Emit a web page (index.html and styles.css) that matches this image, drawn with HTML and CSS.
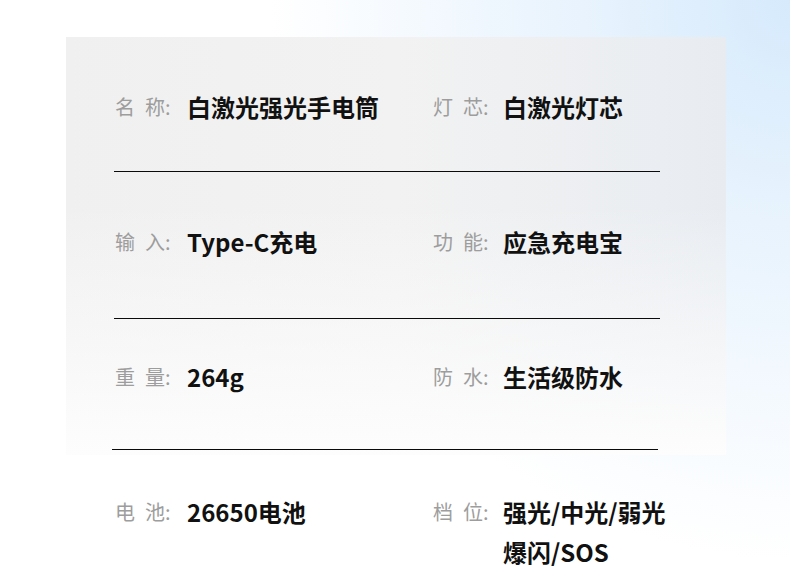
FILE: index.html
```html
<!DOCTYPE html>
<html lang="zh-CN">
<head>
    <meta charset="UTF-8">
    <meta name="viewport" content="width=device-width, initial-scale=1.0">
    <title>白激光强光手电筒 参数</title>
    <link rel="stylesheet" href="styles.css">
</head>
<body>
    <div class="page">
        <div class="spec-card">
            <div class="spec-row row-1">
                <div class="spec-item">
                    <span class="label">名&ensp;称:</span>
                    <span class="value">白激光强光手电筒</span>
                </div>
                <div class="spec-item">
                    <span class="label">灯&ensp;芯:</span>
                    <span class="value">白激光灯芯</span>
                </div>
            </div>
            <div class="divider"></div>
            <div class="spec-row row-2">
                <div class="spec-item">
                    <span class="label">输&ensp;入:</span>
                    <span class="value">Type-C充电</span>
                </div>
                <div class="spec-item">
                    <span class="label">功&ensp;能:</span>
                    <span class="value">应急充电宝</span>
                </div>
            </div>
            <div class="divider"></div>
            <div class="spec-row row-3">
                <div class="spec-item">
                    <span class="label">重&ensp;量:</span>
                    <span class="value">264g</span>
                </div>
                <div class="spec-item">
                    <span class="label">防&ensp;水:</span>
                    <span class="value">生活级防水</span>
                </div>
            </div>
            <div class="divider divider-last"></div>
            <div class="spec-row row-4">
                <div class="spec-item">
                    <span class="label">电&ensp;池:</span>
                    <span class="value">26650电池</span>
                </div>
                <div class="spec-item">
                    <span class="label">档&ensp;位:</span>
                    <span class="value">强光/中光/弱光<br>爆闪/SOS</span>
                </div>
            </div>
        </div>
    </div>
</body>
</html>
```

FILE: styles.css
```css
html, body {
    margin: 0;
    height: 100%;
}
body {
    font-family: "Noto Sans CJK SC", "Noto Sans", sans-serif;
    background: #fff radial-gradient(ellipse 520px 560px at 100% 0%, #d6eafc 0%, #e6f2fd 35%, rgba(255, 255, 255, 0) 100%) no-repeat;
    overflow: hidden;
}
.page {
    padding: 37px 0 0 66px;
}
.spec-card {
    width: 660px;
    box-sizing: border-box;
    padding: 50px 0 0 49px;
    background:
        linear-gradient(to bottom, rgba(255, 255, 255, 0) 40%, rgba(253, 253, 253, 1) 100%) top left / 100% 418px no-repeat,
        linear-gradient(to right, #f0f0f0 0%, #f2f2f2 50%, #e8ecf1 100%) top left / 100% 418px no-repeat;
}
.spec-row {
    display: grid;
    grid-template-columns: 318px 1fr;
    line-height: 40px;
}
.row-1 { margin-bottom: 44px; }
.row-2 { margin-top: 50px; margin-bottom: 56px; }
.row-3 { margin-top: 38px; margin-bottom: 52px; }
.row-4 { margin-top: 42px; }
.spec-item {
    display: flex;
    align-items: flex-start;
}
.label {
    flex: 0 0 72px;
    font-size: 20px;
    color: #9d9d9d;
}
.spec-item + .spec-item .label {
    flex-basis: 70px;
}
.value {
    font-size: 24px;
    font-weight: bold;
    color: #111;
}
.divider {
    width: 546px;
    height: 1px;
    background: #0a0a0a;
    margin-left: -1px;
}
.divider-last {
    margin-left: -3px;
}
```
